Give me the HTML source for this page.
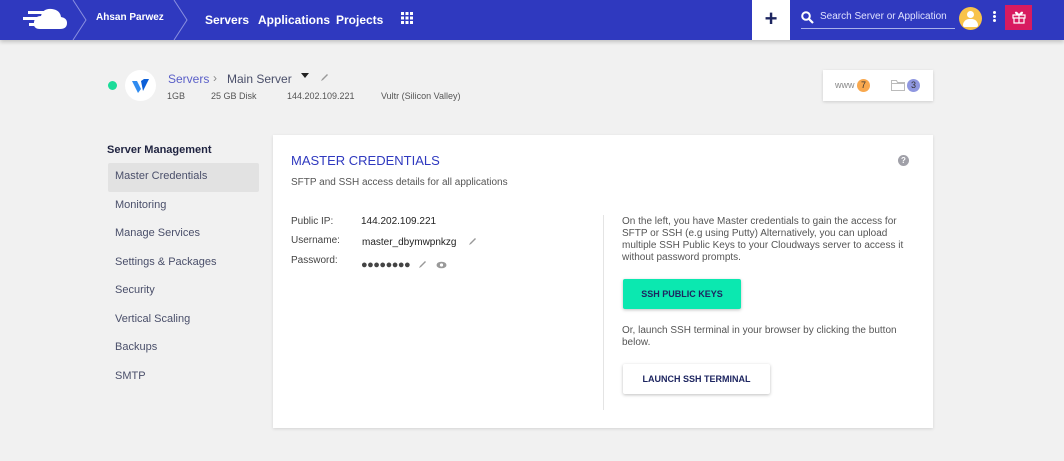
<!DOCTYPE html>
<html><head><meta charset="utf-8"><style>
*{margin:0;padding:0;box-sizing:border-box}
body{width:1064px;height:461px;overflow:hidden;background:#f1f1f1;font-family:"Liberation Sans",sans-serif;position:relative;color:#4a4a5a}
.a{position:absolute}
.nav{left:0;top:0;width:1064px;height:40px;background:#2f39bf;box-shadow:0 2px 4px rgba(0,0,0,.2)}
.nav .t{color:#fff;font-size:12px;font-weight:bold;top:13px}
.side{font-size:11px;color:#4a4f6a}
.card{left:273px;top:135px;width:660px;height:293px;background:#fff;box-shadow:0 1px 3px rgba(0,0,0,.12)}
.lbl{font-size:10px;color:#444}
.btn{font-size:9px;font-weight:bold;color:#1d2560;text-align:center;line-height:31px;box-shadow:0 1px 3px rgba(0,0,0,.25);border-radius:2px}
</style></head><body>
<div class="a nav">
 <svg class="a" style="left:20px;top:5px" width="50" height="26" viewBox="0 0 50 26"><path d="M20 24 Q13 24 14 17 Q15 11 21 11 Q23 3 32 4 Q40 5 41 12 Q47 13 47 18 Q47 24 40 24Z" fill="#fff"/><rect x="8" y="6" width="18" height="3" fill="#fff"/><rect x="3" y="12" width="16" height="3" fill="#fff"/><rect x="9" y="18" width="10" height="3" fill="#fff"/></svg>
 <svg class="a" style="left:70px;top:0" width="120" height="40"><path d="M3 0 L16 20 L3 40 M104 0 L117 20 L104 40" stroke="#8a90e0" fill="none" stroke-width="1"/></svg>
 <div class="a t" style="left:96px;top:12px;font-size:10px">Ahsan Parwez</div>
 <div class="a t" style="left:205px">Servers</div>
 <div class="a t" style="left:258px">Applications</div>
 <div class="a t" style="left:336px">Projects</div>
 <svg class="a" style="left:401px;top:12px" width="12" height="12"><g fill="#fff"><rect x="0" y="0" width="3" height="3"/><rect x="4.5" y="0" width="3" height="3"/><rect x="9" y="0" width="3" height="3"/><rect x="0" y="4.5" width="3" height="3"/><rect x="4.5" y="4.5" width="3" height="3"/><rect x="9" y="4.5" width="3" height="3"/><rect x="0" y="9" width="3" height="3"/><rect x="4.5" y="9" width="3" height="3"/><rect x="9" y="9" width="3" height="3"/></g></svg>
 <div class="a" style="left:752px;top:0;width:38px;height:40px;background:#fff;color:#1d2560;font-size:22px;text-align:center;line-height:38px;font-weight:bold">+</div>
 <svg class="a" style="left:801px;top:11px" width="13" height="13"><circle cx="5" cy="5" r="3.8" stroke="#fff" stroke-width="2" fill="none"/><path d="M8 8 L12 12" stroke="#fff" stroke-width="2.2"/></svg>
 <div class="a" style="left:820px;top:11px;color:#dfe1ff;font-size:10px">Search Server or Application</div>
 <div class="a" style="left:801px;top:28px;width:154px;height:1px;background:#aab0ea"></div>
 <div class="a" style="left:959px;top:7px;width:23px;height:23px;border-radius:50%;background:#f8c34a;overflow:hidden"><div class="a" style="left:8px;top:4px;width:7px;height:7px;border-radius:50%;background:#fff"></div><div class="a" style="left:4px;top:12px;width:15px;height:8px;border-radius:7px 7px 2px 2px;background:#fff"></div></div>
 <div class="a" style="left:993px;top:11px;width:3px;height:3px;background:#fff;border-radius:50%;box-shadow:0 4px 0 #fff,0 8px 0 #fff"></div>
 <div class="a" style="left:1005px;top:5px;width:27px;height:25px;background:#d81b60"><svg class="a" style="left:7px;top:5px" width="14" height="14"><path d="M1 5h12v3H1zM2 8h10v5H2zM7 5v8M7 5 C4 0 1 3 7 5 C10 0 13 3 7 5" stroke="#fff" fill="none" stroke-width="1.2"/></svg></div>
</div>

<div class="a" style="left:108px;top:81px;width:9px;height:9px;border-radius:50%;background:#1bdc99"></div>
<div class="a" style="left:125px;top:70px;width:31px;height:31px;border-radius:50%;background:#fff"><svg class="a" style="left:7px;top:9px" width="18" height="14"><path d="M0 2h5l4 8-3 4z" fill="#2f8bf0"/><path d="M9 2l3-2h5l-6 12z" fill="#0b5fd8"/></svg></div>
<div class="a" style="left:168px;top:72px;font-size:12px;color:#5a5fc8">Servers</div>
<div class="a" style="left:213px;top:71px;font-size:12px;color:#888">›</div>
<div class="a" style="left:227px;top:72px;font-size:12px;color:#4a4f6a">Main Server</div>
<div class="a" style="left:301px;top:73px;width:0;height:0;border-left:4px solid transparent;border-right:4px solid transparent;border-top:5px solid #222"></div>
<svg class="a" style="left:320px;top:73px" width="9" height="9"><path d="M1 8 L2 6 L7 1 L8 2 L3 7Z" fill="#999"/></svg>
<div class="a" style="left:167px;top:91px;font-size:9px;color:#555">1GB</div>
<div class="a" style="left:211px;top:91px;font-size:9px;color:#555">25 GB Disk</div>
<div class="a" style="left:287px;top:91px;font-size:9px;color:#555">144.202.109.221</div>
<div class="a" style="left:381px;top:91px;font-size:9px;color:#555">Vultr (Silicon Valley)</div>

<div class="a" style="left:823px;top:70px;width:110px;height:31px;background:#fff;box-shadow:0 1px 3px rgba(0,0,0,.15)">
 <div class="a" style="left:12px;top:10px;font-size:9px;color:#888">www</div>
 <div class="a" style="left:34px;top:9px;width:13px;height:13px;border-radius:50%;background:#f8a84e;font-size:9px;text-align:center;line-height:13px;color:#333">7</div>
 <svg class="a" style="left:68px;top:10px" width="14" height="11"><path d="M.5 .5h5l1 2h7v8H.5z M.5 3.5h13" stroke="#bbb" fill="none"/></svg>
 <div class="a" style="left:84px;top:9px;width:13px;height:13px;border-radius:50%;background:#8f97e0;font-size:9px;text-align:center;line-height:13px;color:#333">3</div>
</div>

<div class="a" style="left:107px;top:144px;font-size:11px;font-weight:bold;color:#1f2340">Server Management</div>
<div class="a" style="left:108px;top:163px;width:151px;height:29px;background:#e2e2e2;border-radius:2px"></div>
<div class="a side" style="left:115px;top:170px">Master Credentials</div>
<div class="a side" style="left:115px;top:199px">Monitoring</div>
<div class="a side" style="left:115px;top:227px">Manage Services</div>
<div class="a side" style="left:115px;top:256px">Settings &amp; Packages</div>
<div class="a side" style="left:115px;top:284px">Security</div>
<div class="a side" style="left:115px;top:313px">Vertical Scaling</div>
<div class="a side" style="left:115px;top:341px">Backups</div>
<div class="a side" style="left:115px;top:370px">SMTP</div>

<div class="a card">
 <div class="a" style="left:18px;top:18px;font-size:13px;color:#2f39bf">MASTER CREDENTIALS</div>
 <div class="a" style="left:625px;top:20px;width:11px;height:11px;border-radius:50%;background:#a0a0a8;color:#fff;font-size:8px;text-align:center;line-height:11px;font-weight:bold">?</div>
 <div class="a lbl" style="left:18px;top:42px;color:#555">SFTP and SSH access details for all applications</div>
 <div class="a lbl" style="left:18px;top:81px">Public IP:</div>
 <div class="a lbl" style="left:88px;top:81px;color:#222">144.202.109.221</div>
 <div class="a lbl" style="left:18px;top:100px">Username:</div>
 <div class="a lbl" style="left:89px;top:102px;color:#222">master_dbymwpnkzg</div>
 <svg class="a" style="left:195px;top:102px" width="9" height="9"><path d="M1 8 L2 6 L7 1 L8 2 L3 7Z" fill="#999"/></svg>
 <div class="a lbl" style="left:18px;top:120px">Password:</div>
 <div class="a" style="left:88px;top:125px;font-size:11px;line-height:10px;color:#444;letter-spacing:-0.5px">●●●●●●●●</div>
 <svg class="a" style="left:145px;top:125px" width="9" height="9"><path d="M1 8 L2 6 L7 1 L8 2 L3 7Z" fill="#999"/></svg>
 <svg class="a" style="left:163px;top:126px" width="11" height="8"><ellipse cx="5.5" cy="4" rx="5" ry="3.3" fill="#999"/><circle cx="5.5" cy="4" r="1.6" fill="#fff"/></svg>
 <div class="a" style="left:330px;top:80px;width:1px;height:195px;background:#e4e4e4"></div>
 <div class="a lbl" style="left:349px;top:81px;width:300px;line-height:12px;color:#555">On the left, you have Master credentials to gain the access for SFTP or SSH (e.g using Putty) Alternatively, you can upload multiple SSH Public Keys to your Cloudways server to access it without password prompts.</div>
 <div class="a btn" style="left:350px;top:144px;width:118px;height:30px;background:#0be8b0">SSH PUBLIC KEYS</div>
 <div class="a lbl" style="left:349px;top:190px;width:300px;line-height:12px;color:#555">Or, launch SSH terminal in your browser by clicking the button below.</div>
 <div class="a btn" style="left:350px;top:229px;width:147px;height:30px;background:#fff">LAUNCH SSH TERMINAL</div>
</div>
</body></html>
